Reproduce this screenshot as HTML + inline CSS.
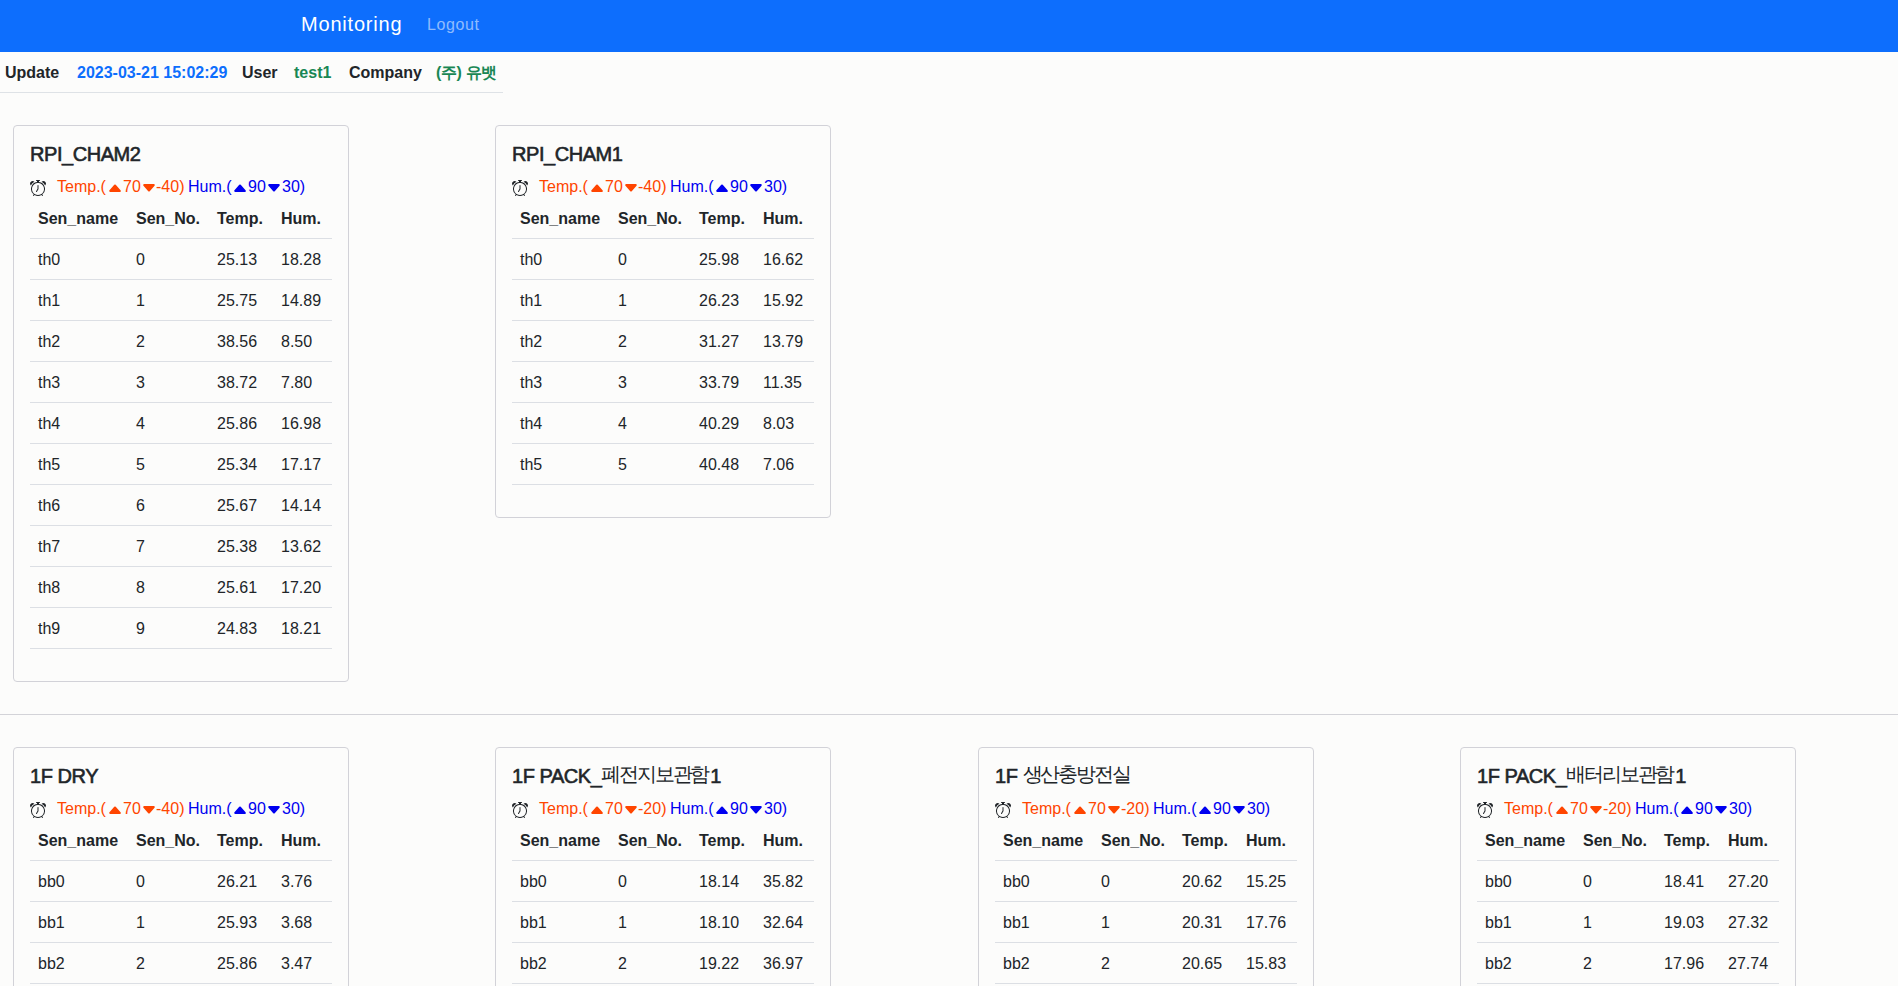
<!DOCTYPE html>
<html><head><meta charset="utf-8"><title>Monitoring</title><style>
*{box-sizing:border-box;margin:0;padding:0}
html,body{width:1898px;height:986px;overflow:hidden;background:#fcfcfb;font-family:"Liberation Sans",sans-serif;color:#212529;font-size:16px;line-height:24px}
.nav{position:absolute;left:0;top:0;width:1898px;height:52px;background:#0d6efd}
.brand{position:absolute;left:301px;top:12px;font-size:20px;line-height:24px;color:#fff;white-space:nowrap;letter-spacing:0.8px}
.logout{position:absolute;left:427px;top:13px;font-size:16px;line-height:24px;color:rgba(255,255,255,.55);white-space:nowrap;letter-spacing:0.6px}
.info span{position:absolute;top:61px;font-weight:bold;white-space:nowrap}
.info .p{color:#0d6efd}.info .g{color:#198754}
.iline{position:absolute;left:0;top:92px;width:503px;height:1px;background:#dee2e6}
.hr{position:absolute;left:0;top:714px;width:1898px;height:1px;background:#d3d3d8}
.card{position:absolute;width:336px;border:1px solid #d2d2d8;border-radius:4px;overflow:hidden}
.ttl{position:absolute;left:16px;top:16px;font-size:20px;line-height:24px;white-space:nowrap;-webkit-text-stroke:0.6px #212529;letter-spacing:-0.45px}
.al{position:absolute;left:-1px;top:49px;width:330px;height:24px}
.al span{position:absolute;top:0;white-space:nowrap}
.ic{position:absolute;top:5px}
.ic.k{fill:#212529}
.o{color:orangered;fill:orangered}
.b{color:#0000f0;fill:#0000f0}
table{position:absolute;left:16px;top:72px;width:302px;border-collapse:separate;border-spacing:0;table-layout:fixed}
th,td{padding:9px 8px 7px;border-bottom:1px solid #dcdfe4;text-align:left;white-space:nowrap;line-height:24px;height:41px}
th{font-weight:bold}
.kr{font-size:20px;-webkit-text-stroke:0;letter-spacing:-2.2px;position:relative;top:-2px;margin-right:2px}
</style></head>
<body>
<div class="nav"><span class="brand">Monitoring</span><span class="logout">Logout</span></div>
<div class="info"><span style="left:5px">Update</span><span class="p" style="left:77px">2023-03-21 15:02:29</span><span style="left:242px">User</span><span class="g" style="left:294px">test1</span><span style="left:349px">Company</span><span class="g" style="left:436px;letter-spacing:-0.4px">(주) 유뱃</span></div>
<div class="iline"></div>
<div class="card" style="left:13px;top:125px;height:557px">
<div class="ttl">RPI_CHAM2</div>
<div class="al"><svg class="ic k" style="left:17px" viewBox="0 0 16 16" width="16" height="16"><path d="M8.5 5.5a.5.5 0 0 0-1 0v3.362l-1.429 2.38a.5.5 0 1 0 .858.515l1.5-2.5A.5.5 0 0 0 8.5 9V5.5z"/><path d="M6.5 0a.5.5 0 0 0 0 1H7v1.07a7.001 7.001 0 0 0-3.273 12.474l-.602.602a.5.5 0 0 0 .707.708l.746-.746A6.97 6.97 0 0 0 8 16a6.97 6.97 0 0 0 3.422-.892l.746.746a.5.5 0 0 0 .707-.708l-.601-.602A7.001 7.001 0 0 0 9 2.07V1h.5a.5.5 0 0 0 0-1h-3zm1.038 3.018a6.093 6.093 0 0 1 .924 0 6 6 0 1 1-.924 0zM0 3.5c0 .753.333 1.429.86 1.91A8.035 8.035 0 0 1 4.387 1.86 2.5 2.5 0 0 0 0 3.5zM13.5 1c-.753 0-1.429.333-1.91.86a8.035 8.035 0 0 1 3.527 3.527A2.5 2.5 0 0 0 13.5 1z"/></svg><span class="o" style="left:44px">Temp.(</span><svg class="ic o" style="left:94px" viewBox="0 0 16 16" width="16" height="16"><path d="m7.247 4.86-4.796 5.481c-.566.647-.106 1.659.753 1.659h9.592a1 1 0 0 0 .753-1.659l-4.796-5.48a1 1 0 0 0-1.506 0z"/></svg><span class="o" style="left:110px">70</span><svg class="ic o" style="left:128px" viewBox="0 0 16 16" width="16" height="16"><path d="M7.247 11.14 2.451 5.658C1.885 5.013 2.345 4 3.204 4h9.592a1 1 0 0 1 .753 1.659l-4.796 5.48a1 1 0 0 1-1.506 0z"/></svg><span class="o" style="left:143px">-40)</span><span class="b" style="left:175px">Hum.(</span><svg class="ic b" style="left:219px" viewBox="0 0 16 16" width="16" height="16"><path d="m7.247 4.86-4.796 5.481c-.566.647-.106 1.659.753 1.659h9.592a1 1 0 0 0 .753-1.659l-4.796-5.48a1 1 0 0 0-1.506 0z"/></svg><span class="b" style="left:235px">90</span><svg class="ic b" style="left:253px" viewBox="0 0 16 16" width="16" height="16"><path d="M7.247 11.14 2.451 5.658C1.885 5.013 2.345 4 3.204 4h9.592a1 1 0 0 1 .753 1.659l-4.796 5.48a1 1 0 0 1-1.506 0z"/></svg><span class="b" style="left:269px">30)</span></div>
<table><colgroup><col style="width:98px"><col style="width:81px"><col style="width:64px"><col style="width:59px"></colgroup>
<thead><tr><th>Sen_name</th><th>Sen_No.</th><th>Temp.</th><th>Hum.</th></tr></thead><tbody><tr><td>th0</td><td>0</td><td>25.13</td><td>18.28</td></tr><tr><td>th1</td><td>1</td><td>25.75</td><td>14.89</td></tr><tr><td>th2</td><td>2</td><td>38.56</td><td>8.50</td></tr><tr><td>th3</td><td>3</td><td>38.72</td><td>7.80</td></tr><tr><td>th4</td><td>4</td><td>25.86</td><td>16.98</td></tr><tr><td>th5</td><td>5</td><td>25.34</td><td>17.17</td></tr><tr><td>th6</td><td>6</td><td>25.67</td><td>14.14</td></tr><tr><td>th7</td><td>7</td><td>25.38</td><td>13.62</td></tr><tr><td>th8</td><td>8</td><td>25.61</td><td>17.20</td></tr><tr><td>th9</td><td>9</td><td>24.83</td><td>18.21</td></tr></tbody></table>
</div><div class="card" style="left:495px;top:125px;height:393px">
<div class="ttl">RPI_CHAM1</div>
<div class="al"><svg class="ic k" style="left:17px" viewBox="0 0 16 16" width="16" height="16"><path d="M8.5 5.5a.5.5 0 0 0-1 0v3.362l-1.429 2.38a.5.5 0 1 0 .858.515l1.5-2.5A.5.5 0 0 0 8.5 9V5.5z"/><path d="M6.5 0a.5.5 0 0 0 0 1H7v1.07a7.001 7.001 0 0 0-3.273 12.474l-.602.602a.5.5 0 0 0 .707.708l.746-.746A6.97 6.97 0 0 0 8 16a6.97 6.97 0 0 0 3.422-.892l.746.746a.5.5 0 0 0 .707-.708l-.601-.602A7.001 7.001 0 0 0 9 2.07V1h.5a.5.5 0 0 0 0-1h-3zm1.038 3.018a6.093 6.093 0 0 1 .924 0 6 6 0 1 1-.924 0zM0 3.5c0 .753.333 1.429.86 1.91A8.035 8.035 0 0 1 4.387 1.86 2.5 2.5 0 0 0 0 3.5zM13.5 1c-.753 0-1.429.333-1.91.86a8.035 8.035 0 0 1 3.527 3.527A2.5 2.5 0 0 0 13.5 1z"/></svg><span class="o" style="left:44px">Temp.(</span><svg class="ic o" style="left:94px" viewBox="0 0 16 16" width="16" height="16"><path d="m7.247 4.86-4.796 5.481c-.566.647-.106 1.659.753 1.659h9.592a1 1 0 0 0 .753-1.659l-4.796-5.48a1 1 0 0 0-1.506 0z"/></svg><span class="o" style="left:110px">70</span><svg class="ic o" style="left:128px" viewBox="0 0 16 16" width="16" height="16"><path d="M7.247 11.14 2.451 5.658C1.885 5.013 2.345 4 3.204 4h9.592a1 1 0 0 1 .753 1.659l-4.796 5.48a1 1 0 0 1-1.506 0z"/></svg><span class="o" style="left:143px">-40)</span><span class="b" style="left:175px">Hum.(</span><svg class="ic b" style="left:219px" viewBox="0 0 16 16" width="16" height="16"><path d="m7.247 4.86-4.796 5.481c-.566.647-.106 1.659.753 1.659h9.592a1 1 0 0 0 .753-1.659l-4.796-5.48a1 1 0 0 0-1.506 0z"/></svg><span class="b" style="left:235px">90</span><svg class="ic b" style="left:253px" viewBox="0 0 16 16" width="16" height="16"><path d="M7.247 11.14 2.451 5.658C1.885 5.013 2.345 4 3.204 4h9.592a1 1 0 0 1 .753 1.659l-4.796 5.48a1 1 0 0 1-1.506 0z"/></svg><span class="b" style="left:269px">30)</span></div>
<table><colgroup><col style="width:98px"><col style="width:81px"><col style="width:64px"><col style="width:59px"></colgroup>
<thead><tr><th>Sen_name</th><th>Sen_No.</th><th>Temp.</th><th>Hum.</th></tr></thead><tbody><tr><td>th0</td><td>0</td><td>25.98</td><td>16.62</td></tr><tr><td>th1</td><td>1</td><td>26.23</td><td>15.92</td></tr><tr><td>th2</td><td>2</td><td>31.27</td><td>13.79</td></tr><tr><td>th3</td><td>3</td><td>33.79</td><td>11.35</td></tr><tr><td>th4</td><td>4</td><td>40.29</td><td>8.03</td></tr><tr><td>th5</td><td>5</td><td>40.48</td><td>7.06</td></tr></tbody></table>
</div>
<div class="hr"></div>
<div class="card" style="left:13px;top:747px;height:311px">
<div class="ttl">1F DRY</div>
<div class="al"><svg class="ic k" style="left:17px" viewBox="0 0 16 16" width="16" height="16"><path d="M8.5 5.5a.5.5 0 0 0-1 0v3.362l-1.429 2.38a.5.5 0 1 0 .858.515l1.5-2.5A.5.5 0 0 0 8.5 9V5.5z"/><path d="M6.5 0a.5.5 0 0 0 0 1H7v1.07a7.001 7.001 0 0 0-3.273 12.474l-.602.602a.5.5 0 0 0 .707.708l.746-.746A6.97 6.97 0 0 0 8 16a6.97 6.97 0 0 0 3.422-.892l.746.746a.5.5 0 0 0 .707-.708l-.601-.602A7.001 7.001 0 0 0 9 2.07V1h.5a.5.5 0 0 0 0-1h-3zm1.038 3.018a6.093 6.093 0 0 1 .924 0 6 6 0 1 1-.924 0zM0 3.5c0 .753.333 1.429.86 1.91A8.035 8.035 0 0 1 4.387 1.86 2.5 2.5 0 0 0 0 3.5zM13.5 1c-.753 0-1.429.333-1.91.86a8.035 8.035 0 0 1 3.527 3.527A2.5 2.5 0 0 0 13.5 1z"/></svg><span class="o" style="left:44px">Temp.(</span><svg class="ic o" style="left:94px" viewBox="0 0 16 16" width="16" height="16"><path d="m7.247 4.86-4.796 5.481c-.566.647-.106 1.659.753 1.659h9.592a1 1 0 0 0 .753-1.659l-4.796-5.48a1 1 0 0 0-1.506 0z"/></svg><span class="o" style="left:110px">70</span><svg class="ic o" style="left:128px" viewBox="0 0 16 16" width="16" height="16"><path d="M7.247 11.14 2.451 5.658C1.885 5.013 2.345 4 3.204 4h9.592a1 1 0 0 1 .753 1.659l-4.796 5.48a1 1 0 0 1-1.506 0z"/></svg><span class="o" style="left:143px">-40)</span><span class="b" style="left:175px">Hum.(</span><svg class="ic b" style="left:219px" viewBox="0 0 16 16" width="16" height="16"><path d="m7.247 4.86-4.796 5.481c-.566.647-.106 1.659.753 1.659h9.592a1 1 0 0 0 .753-1.659l-4.796-5.48a1 1 0 0 0-1.506 0z"/></svg><span class="b" style="left:235px">90</span><svg class="ic b" style="left:253px" viewBox="0 0 16 16" width="16" height="16"><path d="M7.247 11.14 2.451 5.658C1.885 5.013 2.345 4 3.204 4h9.592a1 1 0 0 1 .753 1.659l-4.796 5.48a1 1 0 0 1-1.506 0z"/></svg><span class="b" style="left:269px">30)</span></div>
<table><colgroup><col style="width:98px"><col style="width:81px"><col style="width:64px"><col style="width:59px"></colgroup>
<thead><tr><th>Sen_name</th><th>Sen_No.</th><th>Temp.</th><th>Hum.</th></tr></thead><tbody><tr><td>bb0</td><td>0</td><td>26.21</td><td>3.76</td></tr><tr><td>bb1</td><td>1</td><td>25.93</td><td>3.68</td></tr><tr><td>bb2</td><td>2</td><td>25.86</td><td>3.47</td></tr><tr><td>bb3</td><td>3</td><td></td><td></td></tr></tbody></table>
</div><div class="card" style="left:495px;top:747px;height:311px">
<div class="ttl">1F PACK_<span class="kr">폐전지보관함</span>1</div>
<div class="al"><svg class="ic k" style="left:17px" viewBox="0 0 16 16" width="16" height="16"><path d="M8.5 5.5a.5.5 0 0 0-1 0v3.362l-1.429 2.38a.5.5 0 1 0 .858.515l1.5-2.5A.5.5 0 0 0 8.5 9V5.5z"/><path d="M6.5 0a.5.5 0 0 0 0 1H7v1.07a7.001 7.001 0 0 0-3.273 12.474l-.602.602a.5.5 0 0 0 .707.708l.746-.746A6.97 6.97 0 0 0 8 16a6.97 6.97 0 0 0 3.422-.892l.746.746a.5.5 0 0 0 .707-.708l-.601-.602A7.001 7.001 0 0 0 9 2.07V1h.5a.5.5 0 0 0 0-1h-3zm1.038 3.018a6.093 6.093 0 0 1 .924 0 6 6 0 1 1-.924 0zM0 3.5c0 .753.333 1.429.86 1.91A8.035 8.035 0 0 1 4.387 1.86 2.5 2.5 0 0 0 0 3.5zM13.5 1c-.753 0-1.429.333-1.91.86a8.035 8.035 0 0 1 3.527 3.527A2.5 2.5 0 0 0 13.5 1z"/></svg><span class="o" style="left:44px">Temp.(</span><svg class="ic o" style="left:94px" viewBox="0 0 16 16" width="16" height="16"><path d="m7.247 4.86-4.796 5.481c-.566.647-.106 1.659.753 1.659h9.592a1 1 0 0 0 .753-1.659l-4.796-5.48a1 1 0 0 0-1.506 0z"/></svg><span class="o" style="left:110px">70</span><svg class="ic o" style="left:128px" viewBox="0 0 16 16" width="16" height="16"><path d="M7.247 11.14 2.451 5.658C1.885 5.013 2.345 4 3.204 4h9.592a1 1 0 0 1 .753 1.659l-4.796 5.48a1 1 0 0 1-1.506 0z"/></svg><span class="o" style="left:143px">-20)</span><span class="b" style="left:175px">Hum.(</span><svg class="ic b" style="left:219px" viewBox="0 0 16 16" width="16" height="16"><path d="m7.247 4.86-4.796 5.481c-.566.647-.106 1.659.753 1.659h9.592a1 1 0 0 0 .753-1.659l-4.796-5.48a1 1 0 0 0-1.506 0z"/></svg><span class="b" style="left:235px">90</span><svg class="ic b" style="left:253px" viewBox="0 0 16 16" width="16" height="16"><path d="M7.247 11.14 2.451 5.658C1.885 5.013 2.345 4 3.204 4h9.592a1 1 0 0 1 .753 1.659l-4.796 5.48a1 1 0 0 1-1.506 0z"/></svg><span class="b" style="left:269px">30)</span></div>
<table><colgroup><col style="width:98px"><col style="width:81px"><col style="width:64px"><col style="width:59px"></colgroup>
<thead><tr><th>Sen_name</th><th>Sen_No.</th><th>Temp.</th><th>Hum.</th></tr></thead><tbody><tr><td>bb0</td><td>0</td><td>18.14</td><td>35.82</td></tr><tr><td>bb1</td><td>1</td><td>18.10</td><td>32.64</td></tr><tr><td>bb2</td><td>2</td><td>19.22</td><td>36.97</td></tr><tr><td>bb3</td><td>3</td><td></td><td></td></tr></tbody></table>
</div><div class="card" style="left:978px;top:747px;height:311px">
<div class="ttl">1F <span class="kr">생산충방전실</span></div>
<div class="al"><svg class="ic k" style="left:17px" viewBox="0 0 16 16" width="16" height="16"><path d="M8.5 5.5a.5.5 0 0 0-1 0v3.362l-1.429 2.38a.5.5 0 1 0 .858.515l1.5-2.5A.5.5 0 0 0 8.5 9V5.5z"/><path d="M6.5 0a.5.5 0 0 0 0 1H7v1.07a7.001 7.001 0 0 0-3.273 12.474l-.602.602a.5.5 0 0 0 .707.708l.746-.746A6.97 6.97 0 0 0 8 16a6.97 6.97 0 0 0 3.422-.892l.746.746a.5.5 0 0 0 .707-.708l-.601-.602A7.001 7.001 0 0 0 9 2.07V1h.5a.5.5 0 0 0 0-1h-3zm1.038 3.018a6.093 6.093 0 0 1 .924 0 6 6 0 1 1-.924 0zM0 3.5c0 .753.333 1.429.86 1.91A8.035 8.035 0 0 1 4.387 1.86 2.5 2.5 0 0 0 0 3.5zM13.5 1c-.753 0-1.429.333-1.91.86a8.035 8.035 0 0 1 3.527 3.527A2.5 2.5 0 0 0 13.5 1z"/></svg><span class="o" style="left:44px">Temp.(</span><svg class="ic o" style="left:94px" viewBox="0 0 16 16" width="16" height="16"><path d="m7.247 4.86-4.796 5.481c-.566.647-.106 1.659.753 1.659h9.592a1 1 0 0 0 .753-1.659l-4.796-5.48a1 1 0 0 0-1.506 0z"/></svg><span class="o" style="left:110px">70</span><svg class="ic o" style="left:128px" viewBox="0 0 16 16" width="16" height="16"><path d="M7.247 11.14 2.451 5.658C1.885 5.013 2.345 4 3.204 4h9.592a1 1 0 0 1 .753 1.659l-4.796 5.48a1 1 0 0 1-1.506 0z"/></svg><span class="o" style="left:143px">-20)</span><span class="b" style="left:175px">Hum.(</span><svg class="ic b" style="left:219px" viewBox="0 0 16 16" width="16" height="16"><path d="m7.247 4.86-4.796 5.481c-.566.647-.106 1.659.753 1.659h9.592a1 1 0 0 0 .753-1.659l-4.796-5.48a1 1 0 0 0-1.506 0z"/></svg><span class="b" style="left:235px">90</span><svg class="ic b" style="left:253px" viewBox="0 0 16 16" width="16" height="16"><path d="M7.247 11.14 2.451 5.658C1.885 5.013 2.345 4 3.204 4h9.592a1 1 0 0 1 .753 1.659l-4.796 5.48a1 1 0 0 1-1.506 0z"/></svg><span class="b" style="left:269px">30)</span></div>
<table><colgroup><col style="width:98px"><col style="width:81px"><col style="width:64px"><col style="width:59px"></colgroup>
<thead><tr><th>Sen_name</th><th>Sen_No.</th><th>Temp.</th><th>Hum.</th></tr></thead><tbody><tr><td>bb0</td><td>0</td><td>20.62</td><td>15.25</td></tr><tr><td>bb1</td><td>1</td><td>20.31</td><td>17.76</td></tr><tr><td>bb2</td><td>2</td><td>20.65</td><td>15.83</td></tr><tr><td>bb3</td><td>3</td><td></td><td></td></tr></tbody></table>
</div><div class="card" style="left:1460px;top:747px;height:311px">
<div class="ttl">1F PACK_<span class="kr">배터리보관함</span>1</div>
<div class="al"><svg class="ic k" style="left:17px" viewBox="0 0 16 16" width="16" height="16"><path d="M8.5 5.5a.5.5 0 0 0-1 0v3.362l-1.429 2.38a.5.5 0 1 0 .858.515l1.5-2.5A.5.5 0 0 0 8.5 9V5.5z"/><path d="M6.5 0a.5.5 0 0 0 0 1H7v1.07a7.001 7.001 0 0 0-3.273 12.474l-.602.602a.5.5 0 0 0 .707.708l.746-.746A6.97 6.97 0 0 0 8 16a6.97 6.97 0 0 0 3.422-.892l.746.746a.5.5 0 0 0 .707-.708l-.601-.602A7.001 7.001 0 0 0 9 2.07V1h.5a.5.5 0 0 0 0-1h-3zm1.038 3.018a6.093 6.093 0 0 1 .924 0 6 6 0 1 1-.924 0zM0 3.5c0 .753.333 1.429.86 1.91A8.035 8.035 0 0 1 4.387 1.86 2.5 2.5 0 0 0 0 3.5zM13.5 1c-.753 0-1.429.333-1.91.86a8.035 8.035 0 0 1 3.527 3.527A2.5 2.5 0 0 0 13.5 1z"/></svg><span class="o" style="left:44px">Temp.(</span><svg class="ic o" style="left:94px" viewBox="0 0 16 16" width="16" height="16"><path d="m7.247 4.86-4.796 5.481c-.566.647-.106 1.659.753 1.659h9.592a1 1 0 0 0 .753-1.659l-4.796-5.48a1 1 0 0 0-1.506 0z"/></svg><span class="o" style="left:110px">70</span><svg class="ic o" style="left:128px" viewBox="0 0 16 16" width="16" height="16"><path d="M7.247 11.14 2.451 5.658C1.885 5.013 2.345 4 3.204 4h9.592a1 1 0 0 1 .753 1.659l-4.796 5.48a1 1 0 0 1-1.506 0z"/></svg><span class="o" style="left:143px">-20)</span><span class="b" style="left:175px">Hum.(</span><svg class="ic b" style="left:219px" viewBox="0 0 16 16" width="16" height="16"><path d="m7.247 4.86-4.796 5.481c-.566.647-.106 1.659.753 1.659h9.592a1 1 0 0 0 .753-1.659l-4.796-5.48a1 1 0 0 0-1.506 0z"/></svg><span class="b" style="left:235px">90</span><svg class="ic b" style="left:253px" viewBox="0 0 16 16" width="16" height="16"><path d="M7.247 11.14 2.451 5.658C1.885 5.013 2.345 4 3.204 4h9.592a1 1 0 0 1 .753 1.659l-4.796 5.48a1 1 0 0 1-1.506 0z"/></svg><span class="b" style="left:269px">30)</span></div>
<table><colgroup><col style="width:98px"><col style="width:81px"><col style="width:64px"><col style="width:59px"></colgroup>
<thead><tr><th>Sen_name</th><th>Sen_No.</th><th>Temp.</th><th>Hum.</th></tr></thead><tbody><tr><td>bb0</td><td>0</td><td>18.41</td><td>27.20</td></tr><tr><td>bb1</td><td>1</td><td>19.03</td><td>27.32</td></tr><tr><td>bb2</td><td>2</td><td>17.96</td><td>27.74</td></tr><tr><td>bb3</td><td>3</td><td></td><td></td></tr></tbody></table>
</div>
</body></html>
